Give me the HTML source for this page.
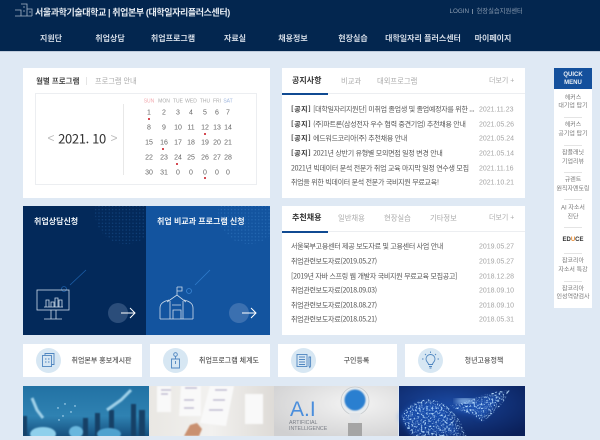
<!DOCTYPE html>
<html lang="ko"><head><meta charset="utf-8"><title>취업본부</title>
<style>
html,body{margin:0;padding:0}
body{width:600px;height:440px;overflow:hidden;position:relative;background:#dfe9f4;font-family:"Liberation Sans","Noto Sans CJK KR",sans-serif;color:#444}
#z{position:absolute;left:0;top:0;width:600px;height:440px;filter:blur(.3px)}
.a{position:absolute}
.t{position:absolute;white-space:nowrap;line-height:1;transform:translateY(-50%)}
.c{position:absolute;white-space:nowrap;line-height:1;transform:translate(-50%,-50%);text-align:center}
.w{background:#fff}
.n{font-size:8px;font-weight:700;color:#d3dbe6}
.r{font-family:"Noto Sans CJK KR",sans-serif;font-size:7px;color:#555;letter-spacing:-.27px}
.r b{color:#333;letter-spacing:.55px}
.d{font-size:7px;color:#a5a5a5}
.cal{font-size:7px;color:#666}
.h{font-size:5px;color:#aaa}
.dot{position:absolute;width:2.4px;height:2.4px;background:#c8101c;border-radius:50%}
.q{font-size:6px;color:#777;line-height:8.5px;transform:translate(-50%,-50%)}
.hr{position:absolute;left:564px;width:18px;height:1px;background:#e4e4e4}
.bt{font-size:7px;font-weight:500;color:#555}
.ic{position:absolute;width:25px;height:25px;border-radius:50%;background:#d7e7f3}
</style></head><body><div id="z">

<div class="a" style="left:0;top:0;width:600px;height:51px;background:#03264f"></div>
<div class="a" style="left:0;top:51px;width:600px;height:1px;background:#bfcbdb"></div>

<svg class="a" style="left:14px;top:3px" width="20" height="16" viewBox="0 0 20 16" fill="none" stroke="#a9b7c8" stroke-width=".8"><path d="M1 7h6v6M7 1h6v12M7 7H3M13 6h5v7M1 13h17"/><path d="M15 9h2M9 4h2M9 8h2"/></svg>
<span class="t" style="left:35px;top:12.5px;font-size:9px;font-weight:700;color:#e4eaf1;letter-spacing:-.4px">서울과학기술대학교 | 취업본부 (대학일자리플러스센터)</span>
<span class="t" style="left:449.5px;top:12px;font-size:6.3px;color:#8c9db2">LOGIN</span>
<span class="a" style="left:472px;top:9px;width:1px;height:5px;background:#75889f"></span>
<span class="t" style="left:476.5px;top:12px;font-size:6.3px;color:#8c9db2">현장실습지원센터</span>

<span class="c n" style="left:51px;top:39px">지원단</span>
<span class="c n" style="left:110px;top:39px">취업상담</span>
<span class="c n" style="left:173px;top:39px">취업프로그램</span>
<span class="c n" style="left:235px;top:39px">자료실</span>
<span class="c n" style="left:293px;top:39px">채용정보</span>
<span class="c n" style="left:353px;top:39px">현장실습</span>
<span class="c n" style="left:423px;top:39px">대학일자리 플러스센터</span>
<span class="c n" style="left:493px;top:39px">마이페이지</span>

<!-- calendar panel -->
<div class="a w" style="left:23px;top:68px;width:247px;height:130px"></div>
<span class="t" style="left:36px;top:81px;font-size:7.5px;font-weight:700;color:#444">월별 프로그램</span>
<span class="a" style="left:86px;top:77px;width:1px;height:8px;background:#e5e5e5"></span>
<span class="t" style="left:95px;top:81px;font-size:7.2px;color:#aaa">프로그램 안내</span>
<div class="a" style="left:35px;top:93px;width:220px;height:90px;border:1px solid #eceef1"></div>
<span class="c" style="left:51px;top:138px;font-size:12px;color:#bbb">&lt;</span>
<span class="c" style="left:82px;top:138px;font-family:'Noto Sans CJK KR',sans-serif;font-size:13px;color:#333;letter-spacing:-.35px">2021. 10</span>
<span class="c" style="left:114px;top:138px;font-size:12px;color:#bbb">&gt;</span>
<span class="a" style="left:123px;top:104px;width:1px;height:71px;background:#e8e8e8"></span>

<span class="c h" style="left:149px;top:102px;color:#f2a8ae">SUN</span>
<span class="c h" style="left:164px;top:102px">MON</span>
<span class="c h" style="left:178px;top:102px">TUE</span>
<span class="c h" style="left:191px;top:102px">WED</span>
<span class="c h" style="left:205px;top:102px">THU</span>
<span class="c h" style="left:217px;top:102px">FRI</span>
<span class="c h" style="left:228px;top:102px;color:#9db5dd">SAT</span>

<span class="c cal" style="left:149px;top:113px">1</span><span class="c cal" style="left:164px;top:113px">2</span><span class="c cal" style="left:178px;top:113px">3</span><span class="c cal" style="left:191px;top:113px">4</span><span class="c cal" style="left:205px;top:113px">5</span><span class="c cal" style="left:217px;top:113px">6</span><span class="c cal" style="left:228px;top:113px">7</span>
<span class="c cal" style="left:149px;top:128px">8</span><span class="c cal" style="left:164px;top:128px">9</span><span class="c cal" style="left:178px;top:128px">10</span><span class="c cal" style="left:191px;top:128px">11</span><span class="c cal" style="left:205px;top:128px">12</span><span class="c cal" style="left:217px;top:128px">13</span><span class="c cal" style="left:228px;top:128px">14</span>
<span class="c cal" style="left:149px;top:143px">15</span><span class="c cal" style="left:164px;top:143px">16</span><span class="c cal" style="left:178px;top:143px">17</span><span class="c cal" style="left:191px;top:143px">18</span><span class="c cal" style="left:205px;top:143px">19</span><span class="c cal" style="left:217px;top:143px">20</span><span class="c cal" style="left:228px;top:143px">21</span>
<span class="c cal" style="left:149px;top:158px">22</span><span class="c cal" style="left:164px;top:158px">23</span><span class="c cal" style="left:178px;top:158px">24</span><span class="c cal" style="left:191px;top:158px">25</span><span class="c cal" style="left:205px;top:158px">26</span><span class="c cal" style="left:217px;top:158px">27</span><span class="c cal" style="left:228px;top:158px">28</span>
<span class="c cal" style="left:149px;top:172.5px">30</span><span class="c cal" style="left:164px;top:172.5px">31</span><span class="c cal" style="left:178px;top:172.5px">0</span><span class="c cal" style="left:191px;top:172.5px">0</span><span class="c cal" style="left:205px;top:172.5px">0</span><span class="c cal" style="left:217px;top:172.5px">0</span><span class="c cal" style="left:228px;top:172.5px">0</span>
<i class="dot" style="left:148px;top:118px"></i><i class="dot" style="left:204px;top:133px"></i><i class="dot" style="left:162px;top:148px"></i><i class="dot" style="left:176px;top:162.5px"></i><i class="dot" style="left:204px;top:177px"></i>

<!-- notice -->
<div class="a w" style="left:282px;top:68px;width:243px;height:130px"></div>
<div class="a" style="left:282px;top:93px;width:243px;height:1px;background:#eceef1"></div>
<div class="a" style="left:282px;top:93px;width:46px;height:2px;background:#104a92"></div>
<span class="t" style="left:292px;top:81px;font-size:8px;font-weight:700;color:#333">공지사항</span>
<span class="t" style="left:341px;top:81px;font-size:7.3px;color:#aaa">비교과</span>
<span class="t" style="left:377px;top:81px;font-size:7.3px;color:#aaa">대외프로그램</span>
<span class="t" style="left:489px;top:81px;font-size:7px;color:#aaa">더보기 +</span>

<span class="t r" style="left:291px;top:110px"><b>[공지]</b> [대학일자리지원단] 미취업 졸업생 및 졸업예정자를 위한 ...</span><span class="t d" style="left:479px;top:110px">2021.11.23</span>
<span class="t r" style="left:291px;top:124.5px"><b>[공지]</b> (주)파트론(삼성전자 우수 협력 중견기업) 추천채용 안내</span><span class="t d" style="left:479px;top:124.5px">2021.05.26</span>
<span class="t r" style="left:291px;top:139px"><b>[공지]</b> 에드워드코리아(주) 추천채용 안내</span><span class="t d" style="left:479px;top:139px">2021.05.24</span>
<span class="t r" style="left:291px;top:153.5px"><b>[공지]</b> 2021년 상반기 유형별 모의면접 일정 변경 안내</span><span class="t d" style="left:479px;top:153.5px">2021.05.14</span>
<span class="t r" style="left:291px;top:168.5px">2021년 빅데이터 분석 전문가 취업 교육 마지막 일정 연수생 모집</span><span class="t d" style="left:479px;top:168.5px">2021.11.16</span>
<span class="t r" style="left:291px;top:183px">취업을 위한 빅데이터 분석 전문가 국비지원 무료교육!</span><span class="t d" style="left:479px;top:183px">2021.10.21</span>

<!-- recommended -->
<div class="a w" style="left:282px;top:206px;width:243px;height:129px"></div>
<div class="a" style="left:282px;top:231px;width:243px;height:1px;background:#eceef1"></div>
<div class="a" style="left:282px;top:231px;width:46px;height:2px;background:#104a92"></div>
<span class="t" style="left:292px;top:218px;font-size:8px;font-weight:700;color:#333">추천채용</span>
<span class="t" style="left:338px;top:218px;font-size:7.3px;color:#aaa">일반채용</span>
<span class="t" style="left:384px;top:218px;font-size:7.3px;color:#aaa">현장실습</span>
<span class="t" style="left:430px;top:218px;font-size:7.3px;color:#aaa">기타정보</span>
<span class="t" style="left:489px;top:218px;font-size:7px;color:#aaa">더보기 +</span>

<span class="t r" style="left:291px;top:247px">서울북부고용센터 제공 보도자료 및 고용센터 사업 안내</span><span class="t d" style="left:479px;top:247px">2019.05.27</span>
<span class="t r" style="left:291px;top:262px">취업관련보도자료(2019.05.27)</span><span class="t d" style="left:479px;top:262px">2019.05.27</span>
<span class="t r" style="left:291px;top:277px">[2019년 자바 스프링 웹 개발자 국비지원 무료교육 모집공고]</span><span class="t d" style="left:479px;top:277px">2018.12.28</span>
<span class="t r" style="left:291px;top:291px">취업관련보도자료(2018.09.03)</span><span class="t d" style="left:479px;top:291px">2018.09.10</span>
<span class="t r" style="left:291px;top:305.5px">취업관련보도자료(2018.08.27)</span><span class="t d" style="left:479px;top:305.5px">2018.09.10</span>
<span class="t r" style="left:291px;top:320px">취업관련보도자료(2018.05.21)</span><span class="t d" style="left:479px;top:320px">2018.05.31</span>

<!-- blue cards -->
<svg class="a" style="left:23px;top:205px" width="248" height="131" viewBox="0 0 248 131">
<defs>
<pattern id="p" width="3.4" height="3.4" patternUnits="userSpaceOnUse"><circle cx="1.2" cy="1.2" r=".6" fill="#2a6fb8"/></pattern>
<clipPath id="c1"><rect x="0" y="1" width="123" height="130"/></clipPath>
<clipPath id="c2"><rect x="123" y="1" width="125" height="130"/></clipPath>
</defs>
<rect x="0" y="1" width="123" height="129" fill="#03295a"/>
<rect x="123" y="1" width="124" height="129" fill="#13549f"/>
<circle cx="103" cy="8" r="31" fill="url(#p)" opacity=".45" clip-path="url(#c1)"/>
<circle cx="226" cy="8" r="31" fill="url(#p)" clip-path="url(#c2)"/>
<path d="M63 65L47 80" stroke="#1c5ea8" stroke-width=".8"/>
<path d="M187 65L172 80" stroke="#2f7bcb" stroke-width=".8"/>
<circle cx="41" cy="84" r="2.5" fill="none" stroke="#1c5ea8" stroke-width=".8"/>
<circle cx="166" cy="86" r="2.5" fill="none" stroke="#3a86d4" stroke-width=".8"/>
<g fill="none" stroke="#cfdcea" stroke-width=".8">
<rect x="14" y="85" width="32" height="20"/>
<path d="M28 105v9M33 105v9M21 114h18M21 102h19"/>
<path d="M23 102v-7h3v7M28 102v-5h3v5M32 102v-9h3v9M36 102v-7h3v7"/>
<path d="M137 114V103Q137 97 146 95M170 114V103Q170 97 161 95M144 97L154 90L163 97M147 96V114M160 96V114M137 114H170M150 114V105H158V114M149 100h9M154 90V82M154 82h5v4h-5"/>
</g>
<circle cx="95" cy="108" r="10" fill="#3a5a85" opacity=".75"/>
<circle cx="216" cy="108" r="10" fill="#4a7ab5" opacity=".75"/>
<path d="M98 108h14M107 103l5 5-5 5" fill="none" stroke="#fff" stroke-width="1"/>
<path d="M219 108h14M228 103l5 5-5 5" fill="none" stroke="#fff" stroke-width="1"/>
</svg>
<span class="t" style="left:34px;top:222px;font-size:8px;font-weight:700;color:#eef3f8">취업상담신청</span>
<span class="t" style="left:157px;top:222px;font-size:8px;font-weight:700;color:#eef3f8">취업 비교과 프로그램 신청</span>

<!-- quick menu -->
<div class="a w" style="left:554px;top:68px;width:38px;height:240px"></div>
<div class="a" style="left:554px;top:68px;width:38px;height:21px;background:#14509c"></div>
<span class="c" style="left:573px;top:78.5px;font-size:6px;font-weight:700;line-height:8px;color:#e9eff6">QUICK<br>MENU</span>
<span class="c q" style="left:573px;top:102.5px">헤커스<br>대기업 탑기</span>
<div class="hr" style="top:117px"></div>
<span class="c q" style="left:573px;top:130px">헤커스<br>공기업 탑기</span>
<div class="hr" style="top:145px"></div>
<span class="c q" style="left:573px;top:158px">잡플래닛<br>기업리뷰</span>
<div class="hr" style="top:172px"></div>
<span class="c q" style="left:573px;top:185px">규렌트<br>원직자멘토링</span>
<div class="hr" style="top:199px"></div>
<span class="c q" style="left:573px;top:213px">AI 자소서<br>진단</span>
<div class="hr" style="top:227px"></div>
<span class="c" style="left:573px;top:240px;font-size:6px;font-weight:700;color:#333">ED<span style="color:#e8872a">U</span>CE</span>
<div class="hr" style="top:253px"></div>
<span class="c q" style="left:573px;top:266px">잡코리아<br>자소서 특강</span>
<div class="hr" style="top:281px"></div>
<span class="c q" style="left:573px;top:293.5px">잡코리아<br>인성역량검사</span>

<!-- buttons -->
<div class="a w" style="left:23px;top:344px;width:119px;height:33px"></div>
<div class="a w" style="left:150px;top:344px;width:120px;height:33px"></div>
<div class="a w" style="left:278px;top:344px;width:119px;height:33px"></div>
<div class="a w" style="left:405px;top:344px;width:120px;height:33px"></div>
<i class="ic" style="left:36px;top:348px"></i><i class="ic" style="left:163px;top:348px"></i><i class="ic" style="left:291px;top:348px"></i><i class="ic" style="left:418px;top:348px"></i>
<svg class="a" style="left:36px;top:348px" width="25" height="25" fill="none" stroke="#4f86c0" stroke-width=".9"><rect x="6.5" y="7.5" width="9" height="11"/><path d="M9 7V5.500h9v11h-2.500M9 11h1.500M12 11h1.500M9 14h1.500M12 14h1.500"/></svg>
<svg class="a" style="left:163px;top:348px" width="25" height="25" fill="none" stroke="#4f86c0" stroke-width=".9"><circle cx="12.500" cy="6.500" r="1.800"/><path d="M8.500 20v-9h8v9zM12.500 8v3M12.500 13v3"/></svg>
<svg class="a" style="left:291px;top:348px" width="25" height="25" fill="none" stroke="#4f86c0" stroke-width=".9"><rect x="6" y="6.500" width="10" height="12"/><path d="M8 9h6M8 11.500h6M8 14h6M8 16.500h6M18 9v9l.8 1.500.8-1.500V9z"/></svg>
<svg class="a" style="left:418px;top:348px" width="25" height="25" fill="none" stroke="#4f86c0" stroke-width=".9"><path d="M10.500 16.500c0-2-2.500-2.500-2.500-5.500a4.500 4.500 0 0 1 9 0c0 3-2.500 3.500-2.500 5.500z"/><path d="M11 18.500h3M11.500 20h2M12.500 3.500v1.500M5.500 11H4M21 11h-1.500M7 6l1 1M18 6l-1 1"/></svg>
<span class="c bt" style="left:101.5px;top:360.5px">취업본부 홍보게시판</span>
<span class="c bt" style="left:229px;top:360.5px">취업프로그램 체계도</span>
<span class="c bt" style="left:356.5px;top:360.5px">구인등록</span>
<span class="c bt" style="left:484px;top:360.5px">청년고용정책</span>

<!-- images -->
<svg class="a" style="left:23px;top:386px" width="502" height="50" viewBox="0 0 502 50">
<defs>
<linearGradient id="g1" x1="0" y1="0" x2="0" y2="1"><stop offset="0" stop-color="#2272a4"/><stop offset=".6" stop-color="#2f82b2"/><stop offset="1" stop-color="#15507f"/></linearGradient>
<linearGradient id="g2" x1="0" y1="0" x2="1" y2="0"><stop offset="0" stop-color="#e9e7e3"/><stop offset=".5" stop-color="#f2f1ef"/><stop offset="1" stop-color="#dedbd7"/></linearGradient>
<radialGradient id="g3" cx=".65" cy=".35" r=".8"><stop offset="0" stop-color="#f4f4f4"/><stop offset="1" stop-color="#d0d0d1"/></radialGradient>
<radialGradient id="g4" cx=".4" cy=".35" r=".8"><stop offset="0" stop-color="#1a48a0"/><stop offset="1" stop-color="#0a1f58"/></radialGradient>
<filter id="bl"><feGaussianBlur stdDeviation="3"/></filter>
<filter id="bs"><feGaussianBlur stdDeviation=".7"/></filter>
<filter id="sp" x="0" y="0" width="100%" height="100%"><feTurbulence type="fractalNoise" baseFrequency=".55" numOctaves="2" seed="4"/><feColorMatrix values="0 0 0 0 .5  0 0 0 0 .75  0 0 0 0 1  4 0 0 0 -2"/></filter>
<clipPath id="dna"><path d="M378 30C392 8 415 10 428 24s12 20 16 26h-56zM425 20c18-2 34-14 62-16-6 14-16 24-28 32-6-8-16-8-34-16z"/></clipPath>
</defs>
<rect width="126" height="50" fill="url(#g1)"/>
<g fill="#123f66" filter="url(#bs)"><rect x="0" y="30" width="4" height="20"/><rect x="60" y="32" width="5" height="18"/><rect x="72" y="27" width="5" height="23"/><rect x="86" y="24" width="5" height="26"/><rect x="108" y="18" width="5" height="32"/><rect x="116" y="24" width="6" height="26"/></g>
<ellipse cx="20" cy="48" rx="13" ry="7" fill="#8fd0ec" filter="url(#bs)"/><ellipse cx="53" cy="46" rx="7" ry="6" fill="#69b7de" filter="url(#bs)"/><ellipse cx="86" cy="48" rx="12" ry="6" fill="#4fa2cf" filter="url(#bs)"/>
<path d="M9 12l5 12 6 8M84 24l14-10 10-10" stroke="#9fd0e8" stroke-width="3" fill="none" filter="url(#bs)"/>
<g fill="#cfeeff"><circle cx="35" cy="22" r=".7"/><circle cx="42" cy="18" r=".7"/><circle cx="48" cy="26" r=".7"/><circle cx="36" cy="34" r=".7"/><circle cx="52" cy="20" r=".7"/><circle cx="40" cy="30" r=".7"/></g>
<rect x="126" width="125" height="50" fill="url(#g2)"/>
<g filter="url(#bs)"><path d="M134 0h14v26h-14zM158 0h20v30h-22zM187 0h24l-8 40-26-3zM222 8h18v30h-18z" fill="#f9f9f9"/>
<path d="M138 4h10M138 8h7M162 2h12M161 14h10M161 22h10M192 4h12M190 14h12M186 24h14" stroke="#b0a8c8" stroke-width="1.200"/>
<path d="M161 50l6-11 7-2 5 6-3 7z" fill="#c99070"/></g>
<rect x="251" width="124" height="50" fill="url(#g3)"/>
<text x="267" y="30" font-family="Liberation Sans" font-size="21" fill="#4a8edc">A.I</text>
<text x="266" y="38" font-family="Liberation Sans" font-size="5.300" fill="#7a7e86">ARTIFICIAL</text>
<text x="266" y="44" font-family="Liberation Sans" font-size="5.300" fill="#7a7e86">INTELLIGENCE</text>
<circle cx="332" cy="15" r="14" fill="#e8ecef" stroke="#c5c9cc" stroke-width=".8"/>
<path d="M326 27l3 10h6l3-10z" fill="#e2e5e8"/>
<circle cx="332" cy="14" r="10.500" fill="#2b7fd0" filter="url(#bs)"/>
<rect x="325" y="37" width="14" height="13" fill="#a5a5a5"/>
<rect x="375" width="1" height="50" fill="#dfe9f4"/>
<rect x="376" width="126" height="50" fill="url(#g4)"/>
<path d="M376 30C395 10 415 14 425 27s10 20 14 23h-50z" fill="#1e5fcf" opacity=".5" filter="url(#bl)"/>
<path d="M425 22c20-2 32-12 55-14-8 12-15 20-22 26-5-8-15-6-33-12z" fill="#2a6fe0" opacity=".45" filter="url(#bl)"/>
<g clip-path="url(#dna)"><rect x="376" width="126" height="50" filter="url(#sp)"/></g>
<ellipse cx="442" cy="15" rx="10" ry="2.500" fill="#a8d4ff" filter="url(#bl)"/>
</svg>
</div></body></html>
